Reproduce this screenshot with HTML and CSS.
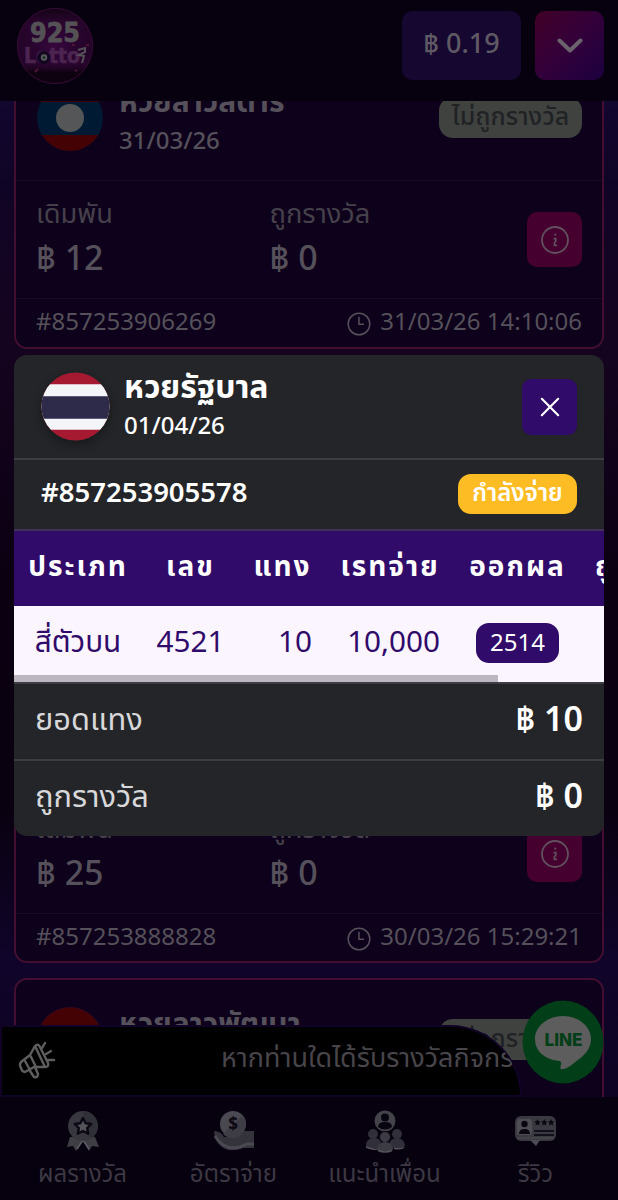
FILE: index.html
```html
<!DOCTYPE html>
<html lang="th">
<head>
<meta charset="utf-8">
<title>925 Lotto</title>
<link rel="stylesheet" href="styles.css">
</head>
<body>
<svg width="0" height="0" class="defs">
  <symbol id="info" viewBox="0 0 28 28"><circle cx="14" cy="14" r="13" fill="none" stroke="currentColor" stroke-width="1.8"/><circle cx="14.3" cy="8.6" r="1.1" fill="currentColor"/><path d="M12.6 12.6h2.2v2.4l-1.400 2v2.400h2.600" fill="none" stroke="currentColor" stroke-width="1.700"/></symbol>
  <symbol id="clock" viewBox="0 0 24 24"><circle cx="12" cy="12" r="10.8" fill="none" stroke="currentColor" stroke-width="1.5"/><path d="M12 4.8v7.4h5" fill="none" stroke="currentColor" stroke-width="1.5"/></symbol>
</svg>
<div class="app">
  <header class="topbar">
    <svg class="logo" viewBox="0 0 78 78">
      <defs><radialGradient id="lg" cx=".5" cy=".5" r=".5"><stop offset="0" stop-color="#36073d"/><stop offset=".55" stop-color="#29052f"/><stop offset="1" stop-color="#240428"/></radialGradient>
      <linearGradient id="ls" x2="0" y2="1"><stop offset="0" stop-color="#080209" stop-opacity=".75"/><stop offset=".3" stop-color="#3d0a43" stop-opacity="0"/><stop offset=".68" stop-color="#3d0a43" stop-opacity="0"/><stop offset=".85" stop-color="#080109" stop-opacity=".8"/></linearGradient></defs>
      <circle cx="39" cy="39" r="38" fill="url(#lg)"/><circle cx="39" cy="39" r="37.6" fill="url(#ls)" stroke="#370a38" stroke-width="1"/>
      <text class="logo-num" x="14" y="35" textLength="50" lengthAdjust="spacingAndGlyphs">925</text>
      <text class="logo-word" x="8" y="56" textLength="56" lengthAdjust="spacingAndGlyphs">Lotto</text>
      <circle cx="27.500" cy="50.500" r="6.500" fill="#130620"/><circle cx="28" cy="50.500" r="3.200" fill="#5b595c"/><circle cx="28" cy="50.500" r="1.300" fill="#0c2c1f"/>
      <path d="M62 43l7-2v4l-6 3 5 1-2 7" fill="none" stroke="#555158" stroke-width="2"/>
      <path d="M19 65l3-3M59 64l2-1M70 38l3 0M56 38l3 0" stroke="#4d1437" stroke-width="2"/>
    </svg>
    <div class="top-actions">
      <div class="balance">฿ 0.19</div>
      <div class="toggle"><svg width="26" height="16" viewBox="0 0 26 16"><path d="M2.500 2.500L13 12.500 23.500 2.500" fill="none" stroke="#6a626c" stroke-width="4" stroke-linecap="round" stroke-linejoin="round"/></svg></div>
    </div>
  </header>

  <main class="feed">
    <div class="cards">
      <article class="card">
        <div class="card-head">
          <svg class="flag" viewBox="0 0 66 66"><defs><clipPath id="c1"><circle cx="33" cy="33" r="33"/></clipPath></defs><g clip-path="url(#c1)"><path fill="#001a33" d="M0 0h66v66H0z"/><path fill="#450205" d="M0 0h66v17H0zM0 50h66v16H0z"/></g><circle cx="33" cy="33" r="14" fill="#555658"/></svg>
          <div class="names"><div class="title">หวยลาวสตาร์</div><div class="date">31/03/26</div></div>
          <span class="badge">ไม่ถูกรางวัล</span>
        </div>
        <div class="card-mid">
          <div class="stat"><div class="label">เดิมพัน</div><div class="value">฿ 12</div></div>
          <div class="stat"><div class="label">ถูกรางวัล</div><div class="value">฿ 0</div></div>
          <div class="info"><svg width="28" height="28"><use href="#info"/></svg></div>
        </div>
        <div class="card-foot"><span>#857253906269</span><span class="time"><svg width="24" height="24"><use href="#clock"/></svg>31/03/26 14:10:06</span></div>
      </article>
      <article class="card"></article>
      <article class="card">
        <div class="card-head"></div>
        <div class="card-mid">
          <div class="stat"><div class="label">เดิมพัน</div><div class="value">฿ 25</div></div>
          <div class="stat"><div class="label">ถูกรางวัล</div><div class="value">฿ 0</div></div>
          <div class="info"><svg width="28" height="28"><use href="#info"/></svg></div>
        </div>
        <div class="card-foot"><span>#857253888828</span><span class="time"><svg width="24" height="24"><use href="#clock"/></svg>30/03/26 15:29:21</span></div>
      </article>
      <article class="card">
        <div class="card-head">
          <svg class="flag" viewBox="0 0 66 66"><circle cx="33" cy="33" r="32.500" fill="#450205" stroke="#39081c"/></svg>
          <div class="names"><div class="title">หวยลาวพัฒนา</div></div>
          <span class="badge">ไม่ถูกรางวัล</span>
        </div>
      </article>
    </div>
  </main>

  <nav class="tabs">
    <div class="tab"><svg width="40" height="44" viewBox="0 0 40 44"><path d="M7 28L4 38l6-1 3 5 7-10 6 10 3-5 7 1-4-10" fill="#3f3e45"/><path d="M14 40l6-9 6 9" fill="none" stroke="#5f5c63" stroke-width="1.500"/><circle cx="20" cy="17" r="15" fill="#38363f"/><path d="M20 2a15 15 0 0 1 7 28z" fill="#303038"/><path d="M20 9l2.600 5.200 5.700.8-4.100 4 1 5.700-5.200-2.700-5.200 2.700 1-5.700-4.100-4 5.700-.8z" fill="#56545b" stroke="#0b0713" stroke-width="2.400" stroke-linejoin="round"/></svg><span>ผลรางวัล</span></div>
    <div class="tab"><svg width="42" height="44" viewBox="0 0 42 44"><path d="M1 22q7 0 10 6h13l6-6h11v17H30q-13 5-21-1Q1 32 1 22z" fill="#34323b"/><path d="M2 27q9 15 25 11l7-3h7" fill="none" stroke="#4a4951" stroke-width="3"/><circle cx="20" cy="15" r="13" fill="#4a4850"/><path d="M10 25a13 13 0 0 0 19-18z" fill="#3e3d45"/><text x="20" y="21" class="dollar">$</text></svg><span>อัตราจ่าย</span></div>
    <div class="tab"><svg width="40" height="44" viewBox="0 0 40 44"><circle cx="20" cy="12" r="10.500" fill="#44434a"/><circle cx="20" cy="8.500" r="4" fill="#080510"/><path d="M13 18q0-5 7-5t7 5q-7 5-14 0z" fill="#080510"/><g fill="#312f39"><circle cx="8" cy="25" r="5"/><circle cx="32" cy="25" r="5"/><path d="M1 37q0-8 8-8t7 8v2H3zM24 39v-3q1-7 8-7t8 8l-3 2z"/></g><circle cx="20" cy="28" r="5.500" fill="#3c3a43" stroke="#0b0713"/><path d="M12 41q0-8 8-8t8 8q-8 3-16 0z" fill="#3c3a43"/><path d="M1 38q8 3 11 2m1 1.500q7 3 14 0m2-2q7 1 10-1" stroke="#55535a" stroke-width="1.500" fill="none"/></svg><span>แนะนำเพื่อน</span></div>
    <div class="tab"><svg width="42" height="44" viewBox="0 0 42 44"><rect x="0" y="7" width="41" height="25" rx="6" fill="#3a3841"/><path d="M15 31l6 6 4-6z" fill="#4c4a52"/><rect x="2" y="10" width="15" height="16" rx="3" fill="#4f4d54"/><path d="M3 29h35" stroke="#504e55"/><circle cx="9.500" cy="15" r="3.200" fill="#0a0711"/><path d="M4 25q0-5 5.500-5t5.500 5z" fill="#0a0711"/><path d="M19 22h20M19 26h20" stroke="#13101b" stroke-width="1.800"/><path id="st" d="M22.500 10l1 2.200 2.200.3-1.600 1.600.4 2.400-2-1.200-2 1.200.4-2.400-1.600-1.600 2.200-.3z" fill="#0a0711"/><use href="#st" x="6.800"/><use href="#st" x="13.600"/></svg><span>รีวิว</span></div>
  </nav>

  <div class="marquee">
    <svg width="38" height="38" viewBox="0 0 38 38" fill="none" stroke="#5e5e5e" stroke-width="2.400" stroke-linecap="round" stroke-linejoin="round"><path d="M3 20L12 13 17 4q3-3 5 1l8 16q1 4-3 4l-11 0-9 5q-3 0-4-4-2-3 0-6zM7 19l5 9M12 13l6 12M17 4l10 21M12 29l4 6q4 1 4-3l-3-7M24 6l3-5M28 12l5-3M30 18h6"/></svg>
    <span class="notice">หากท่านใดได้รับรางวัลกิจกร</span>
  </div>
  <svg class="line" width="82" height="84" viewBox="0 0 82 84"><ellipse cx="41" cy="42" rx="40.500" ry="41.500" fill="#023e18"/><path d="M41 16c15 0 28 10 28 23 0 10-7 17-17 24-5 4-10 7-13 6-2-1 2-6-1-8-14-1-25-9-25-22 0-13 13-23 28-23z" fill="#5d5d5d"/><text x="41.500" y="45.500" textLength="38" lengthAdjust="spacingAndGlyphs">LINE</text></svg>

  <section class="modal">
    <div class="m-head">
      <svg class="m-flag" width="69" height="69" viewBox="0 0 70 70"><defs><clipPath id="c2"><circle cx="35" cy="35" r="34.500"/></clipPath></defs><g clip-path="url(#c2)"><path fill="#a51931" d="M0 0h70v70H0z"/><path fill="#f4f5f8" d="M0 12.500h70v46H0z"/><path fill="#2d2a4a" d="M0 24.500h70v23H0z"/></g></svg>
      <div class="m-names"><div class="m-title">หวยรัฐบาล</div><div class="m-date">01/04/26</div></div>
      <div class="close"><svg width="20" height="20" viewBox="0 0 22 22"><path d="M2 2l18 18M20 2L2 20" stroke="#fff" stroke-width="2.400" stroke-linecap="round"/></svg></div>
    </div>
    <div class="m-id"><span>#857253905578</span><span class="paying">กำลังจ่าย</span></div>
    <div class="table">
      <div class="row th"><span>ประเภท</span><span>เลข</span><span>แทง</span><span>เรทจ่าย</span><span>ออกผล</span><span class="last">ถูกรางวัล</span></div>
      <div class="row td"><span>สี่ตัวบน</span><span>4521</span><span class="num">10</span><span class="num">10,000</span><span><b class="pill">2514</b></span><span></span></div>
      <div class="scroll"></div>
    </div>
    <div class="sum"><span>ยอดแทง</span><b>฿ 10</b></div>
    <div class="sum"><span>ถูกรางวัล</span><b>฿ 0</b></div>
  </section>
</div>
</body>
</html>
```
FILE: styles.css
```css
* { box-sizing: border-box; }
body {
  margin: 0;
  font-family: "Noto Sans", "Noto Sans Thai", sans-serif;
  color: #555059;
  background: #0a0118;
}
svg { display: block; flex: none; }
.defs { position: absolute; }
.app {
  position: relative;
  display: flex;
  flex-direction: column;
  width: 618px;
  height: 1200px;
  overflow: hidden;
}
.topbar {
  flex: none;
  display: flex;
  align-items: center;
  justify-content: space-between;
  height: 101px;
  padding: 0 14px 10px 16px;
  background: #06000f;
}
.logo { width: 78px; height: 78px; }
.logo text { font-family: "DejaVu Sans", sans-serif; font-weight: 700; }
.logo-num { font-size: 26px; fill: #555256; stroke: #555256; stroke-width: .8px; }
.logo-word { font-size: 22px; fill: #4c2450; stroke: #4c2450; stroke-width: .6px; }
.top-actions { display: flex; gap: 14px; }
.balance, .toggle {
  display: flex;
  align-items: center;
  justify-content: center;
  height: 69px;
  border-radius: 10px;
}
.balance {
  width: 119px;
  padding-bottom: 2px;
  background: #160730;
  color: #5f5964;
  font-size: 27px;
  font-weight: 500;
}
.toggle { width: 69px; background: linear-gradient(135deg, #410027, #33003a 50%, #1b003f); }

.feed {
  flex: none;
  height: 996px;
  overflow: hidden;
  background: linear-gradient(180deg, #13062f 0, #100426 80px, #15041f 245px, #0b0012 480px, #09010f 700px, #10042a 860px, #0e0322 996px);
}
.cards {
  display: flex;
  flex-direction: column;
  gap: 14.5px;
  margin-top: -45px;
  padding: 0 14px;
}
.card {
  flex: none;
  height: 292.75px;
  border: 2px solid #420f30;
  border-radius: 13px;
  background: #0d011c;
}
.card-head {
  display: flex;
  height: 123px;
  padding: 27px 20px 0 21px;
  border-bottom: 1px solid #170b27;
}
.flag { width: 66px; height: 66px; }
.names { margin-left: 16px; flex: 1; }
.title { height: 36px; font-size: 30px; font-weight: 700; line-height: 31px; white-space: nowrap; }
.date { font-size: 24px; font-weight: 500; line-height: 37px; }
.badge {
  width: 143px;
  height: 41px;
  margin-top: 12px;
  border-radius: 14px;
  background: #40423f;
  color: #202226;
  font-size: 25px;
  font-weight: 500;
  line-height: 36px;
  text-align: center;
  white-space: nowrap;
}
.card-mid {
  display: flex;
  align-items: flex-start;
  height: 118px;
  padding: 13px 20px 0 20px;
  border-bottom: 1px solid #170b27;
}
.stat { width: 233.500px; }
.label { height: 40px; color: #45404a; font-size: 27.300px; line-height: 37px; white-space: nowrap; }
.value { font-size: 34px; font-weight: 500; line-height: 47px; white-space: nowrap; }
.info {
  display: flex;
  align-items: center;
  justify-content: center;
  width: 55px;
  height: 55px;
  margin: 18px 0 0 auto;
  border-radius: 10px;
  background: #45002f;
  color: #62505f;
}
.card-foot {
  display: flex;
  justify-content: space-between;
  padding: 2px 20px 0 20px;
  font-size: 24px;
  line-height: 40px;
}
.time { display: flex; gap: 9px; }
.time svg { margin-top: 11px; }

.tabs {
  display: grid;
  grid-template-columns: repeat(4, 151px);
  flex: none;
  height: 103px;
  padding: 12px 7px 0;
  background: #06000f;
}
.tab { display: flex; flex-direction: column; align-items: center; color: #3d3843; font-size: 24px; line-height: 36px; white-space: nowrap; }
.tab span { margin-top: 2px; }
.dollar { font-size: 17px; font-weight: 700; text-anchor: middle; fill: #0b0811; }

.marquee {
  position: absolute;
  left: 0;
  top: 1025px;
  display: flex;
  align-items: center;
  width: 522px;
  height: 72px;
  padding-left: 16px;
  overflow: hidden;
  border: 2px solid #100326;
  border-radius: 0 72px 0 0;
  background: #000;
}
.notice { margin: 0 0 5px 165px; color: #48454b; font-size: 27px; white-space: nowrap; }
.line { position: absolute; left: 522px; top: 1000px; }
.line text { font-family: Inter, sans-serif; fill: #023e18; font-size: 18px; font-weight: 800; text-anchor: middle; }

.modal {
  position: absolute;
  left: 14px;
  top: 355px;
  width: 590px;
  height: 481px;
  overflow: hidden;
  border-radius: 13px;
  background: #242528;
  color: #fff;
}
.m-head {
  display: flex;
  height: 105px;
  padding: 17px 27px 0 27px;
  border-bottom: 2px solid #3d3e43;
}
.m-flag { border-radius: 50%; box-shadow: 0 4px 10px #0005; }
.m-names { margin-left: 14px; flex: 1; }
.m-title { height: 36px; font-size: 32px; font-weight: 700; line-height: 28px; white-space: nowrap; }
.m-date { font-size: 24px; font-weight: 500; line-height: 34px; }
.close { display: flex; align-items: center; justify-content: center; width: 55px; height: 56px; margin-top: 7px; border-radius: 9px; background: #300b69; }
.m-id {
  display: flex;
  justify-content: space-between;
  height: 69px;
  padding: 14px 27px 0 27px;
  font-size: 27.500px;
  font-weight: 600;
  line-height: 36px;
}
.paying { width: 119px; height: 40px; border-radius: 13px; background: #fdbc23; font-size: 24px; line-height: 35px; text-align: center; white-space: nowrap; }
.table { height: 153px; background: #faf5ff; overflow: hidden; }
.row { display: grid; grid-template-columns: 128px 97px 87px 128px 127px 140px; text-align: center; white-space: nowrap; }
.th { height: 77px; border-top: 2px solid #433058; background: #300b69; font-size: 28px; font-weight: 700; letter-spacing: 2px; line-height: 68px; }
.td { height: 69px; color: #300b69; font-size: 29.700px; line-height: 69px; }
.td .num { padding-right: 14px; text-align: right; }
.last { text-align: left; padding-left: 14px; }
.pill { display: inline-block; width: 83px; height: 40px; margin: 17px 0 0; vertical-align: top; border-radius: 13px; background: #300b69; color: #fff; font-size: 24px; font-weight: 400; line-height: 37px; }
.scroll { width: 484px; height: 7px; background: #bcb7c0; }
.sum {
  display: flex;
  justify-content: space-between;
  height: 77px;
  padding: 0 21px;
  border-top: 2px solid #3d3e43;
  color: #d8d8da;
  font-size: 30.800px;
  line-height: 69px;
}
.sum b { color: #fff; font-size: 34px; font-weight: 600; }
```
